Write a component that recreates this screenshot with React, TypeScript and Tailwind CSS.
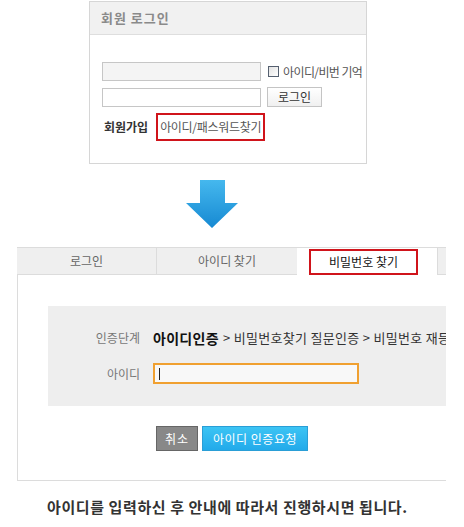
import React from 'react';

const font = { fontFamily: '"Noto Sans CJK KR", "Noto Sans", sans-serif' };

function DownArrow() {
  return (
    <svg width="54" height="49" viewBox="0 0 54 49">
      <defs>
        <linearGradient id="arrowFill" x1="0" y1="0" x2="0" y2="1">
          <stop offset="0" stopColor="#45b8ee" />
          <stop offset="1" stopColor="#1689d2" />
        </linearGradient>
      </defs>
      <polygon points="15,0 40,0 40,23 53,23 27,48 1,23 15,23" fill="url(#arrowFill)" />
    </svg>
  );
}

export default function App() {
  return (
    <div className="w-[464px] h-[527px] bg-white overflow-hidden pt-[1px]" style={font}>
      {/* Login box */}
      <div className="ml-[89px] w-[278px] h-[163px] border border-[#d6d6d6]">
        <div className="h-[33px] bg-[#f1f1f1] border-b border-[#dedede] pl-[11px] flex items-center text-[13px] font-bold text-[#8a8a8a] tracking-[1px]">
          회원 로그인
        </div>
        <div className="pl-[12px] pt-[27px]">
          <div className="flex items-center h-[19px]">
            <div className="w-[159px] h-[19px] border border-[#c6c6c6] bg-[#f4f4f4]" />
            <div className="ml-[7px] w-[11px] h-[11px] border border-[#556070] bg-gradient-to-br from-[#e2e2e2] to-white" />
            <span className="ml-[4px] text-[12px] text-[#555] tracking-[-0.6px]">아이디/비번 기억</span>
          </div>
          <div className="flex items-center mt-[6px] h-[20px]">
            <div className="w-[159px] h-[19px] border border-[#c6c6c6] bg-white" />
            <div className="ml-[6px] w-[55px] h-[20px] border border-[#c4c4c4] bg-gradient-to-b from-white to-[#f0f0f0] flex items-center justify-center text-[12px] text-[#333]">
              로그인
            </div>
          </div>
          <div className="flex items-center mt-[6px]">
            <span className="ml-[2px] text-[12px] font-bold text-[#333]">회원가입</span>
            <div className="ml-[8px] w-[109px] h-[28px] border-2 border-[#d0141b] flex items-center justify-center text-[12px] text-[#555] tracking-[-0.3px]">
              아이디/패스워드찾기
            </div>
          </div>
        </div>
      </div>

      {/* Arrow */}
      <div className="ml-[185px] mt-[16px]">
        <DownArrow />
      </div>

      {/* Tabs panel */}
      <div className="ml-[17px] mt-[18px] w-[429px]">
        <div className="flex h-[28px] border-t border-[#dcdcdc] bg-[#efefef] text-[12px]">
          <div className="w-[140px] border-b border-r border-[#dcdcdc] flex items-center justify-center text-[#666]">로그인</div>
          <div className="w-[140px] border-b border-[#dcdcdc] flex items-center justify-center text-[#666]">아이디 찾기</div>
          <div className="w-[140px] bg-white flex items-end pl-[12px]">
            <div className="w-[109px] h-[26px] border-2 border-[#d0141b] flex items-center justify-center text-[#111] text-[12px]">
              비밀번호 찾기
            </div>
          </div>
          <div className="flex-1 border-l border-b border-[#dcdcdc]" />
        </div>
        <div className="h-[206px] border-l border-b border-[#dcdcdc] pt-[31px] pl-[30px]">
          <div className="h-[100px] bg-[#eeeeee] pt-[25px] overflow-hidden">
            <div className="flex items-center h-[14px] whitespace-nowrap">
              <span className="w-[92px] shrink-0 text-right text-[12px] text-[#777]">인증단계</span>
              <span className="ml-[13px] shrink-0 text-[14px] font-bold text-[#111] tracking-[0.3px]">아이디인증</span>
              <span className="ml-[4px] shrink-0 text-[13px] text-[#333] tracking-[0.3px]">&gt; 비밀번호찾기 질문인증 &gt; 비밀번호 재등록</span>
            </div>
            <div className="flex items-center mt-[18px]">
              <span className="w-[92px] shrink-0 text-right text-[12px] text-[#777]">아이디</span>
              <div className="ml-[13px] w-[206px] h-[21px] border-2 border-[#f0a030] bg-[#f8f8f8] flex items-center pl-[4px]">
                <div className="w-px h-[12px] bg-[#222]" />
              </div>
            </div>
          </div>
          <div className="flex mt-[20px] ml-[108px] gap-[4px] h-[25px] text-[12px] text-white">
            <div className="w-[42px] bg-[#888] border border-[#666] flex items-center justify-center tracking-[1px]">취소</div>
            <div className="w-[106px] bg-gradient-to-b from-[#3cc4f4] to-[#22aaea] border border-[#2a9ed6] flex items-center justify-center tracking-[0.5px]">
              아이디 인증요청
            </div>
          </div>
        </div>
      </div>

      {/* Caption */}
      <div className="ml-[47px] mt-[15px] text-[15px] font-bold text-[#333] tracking-[0.6px] whitespace-nowrap">
        아이디를 입력하신 후 안내에 따라서 진행하시면 됩니다.
      </div>
    </div>
  );
}
